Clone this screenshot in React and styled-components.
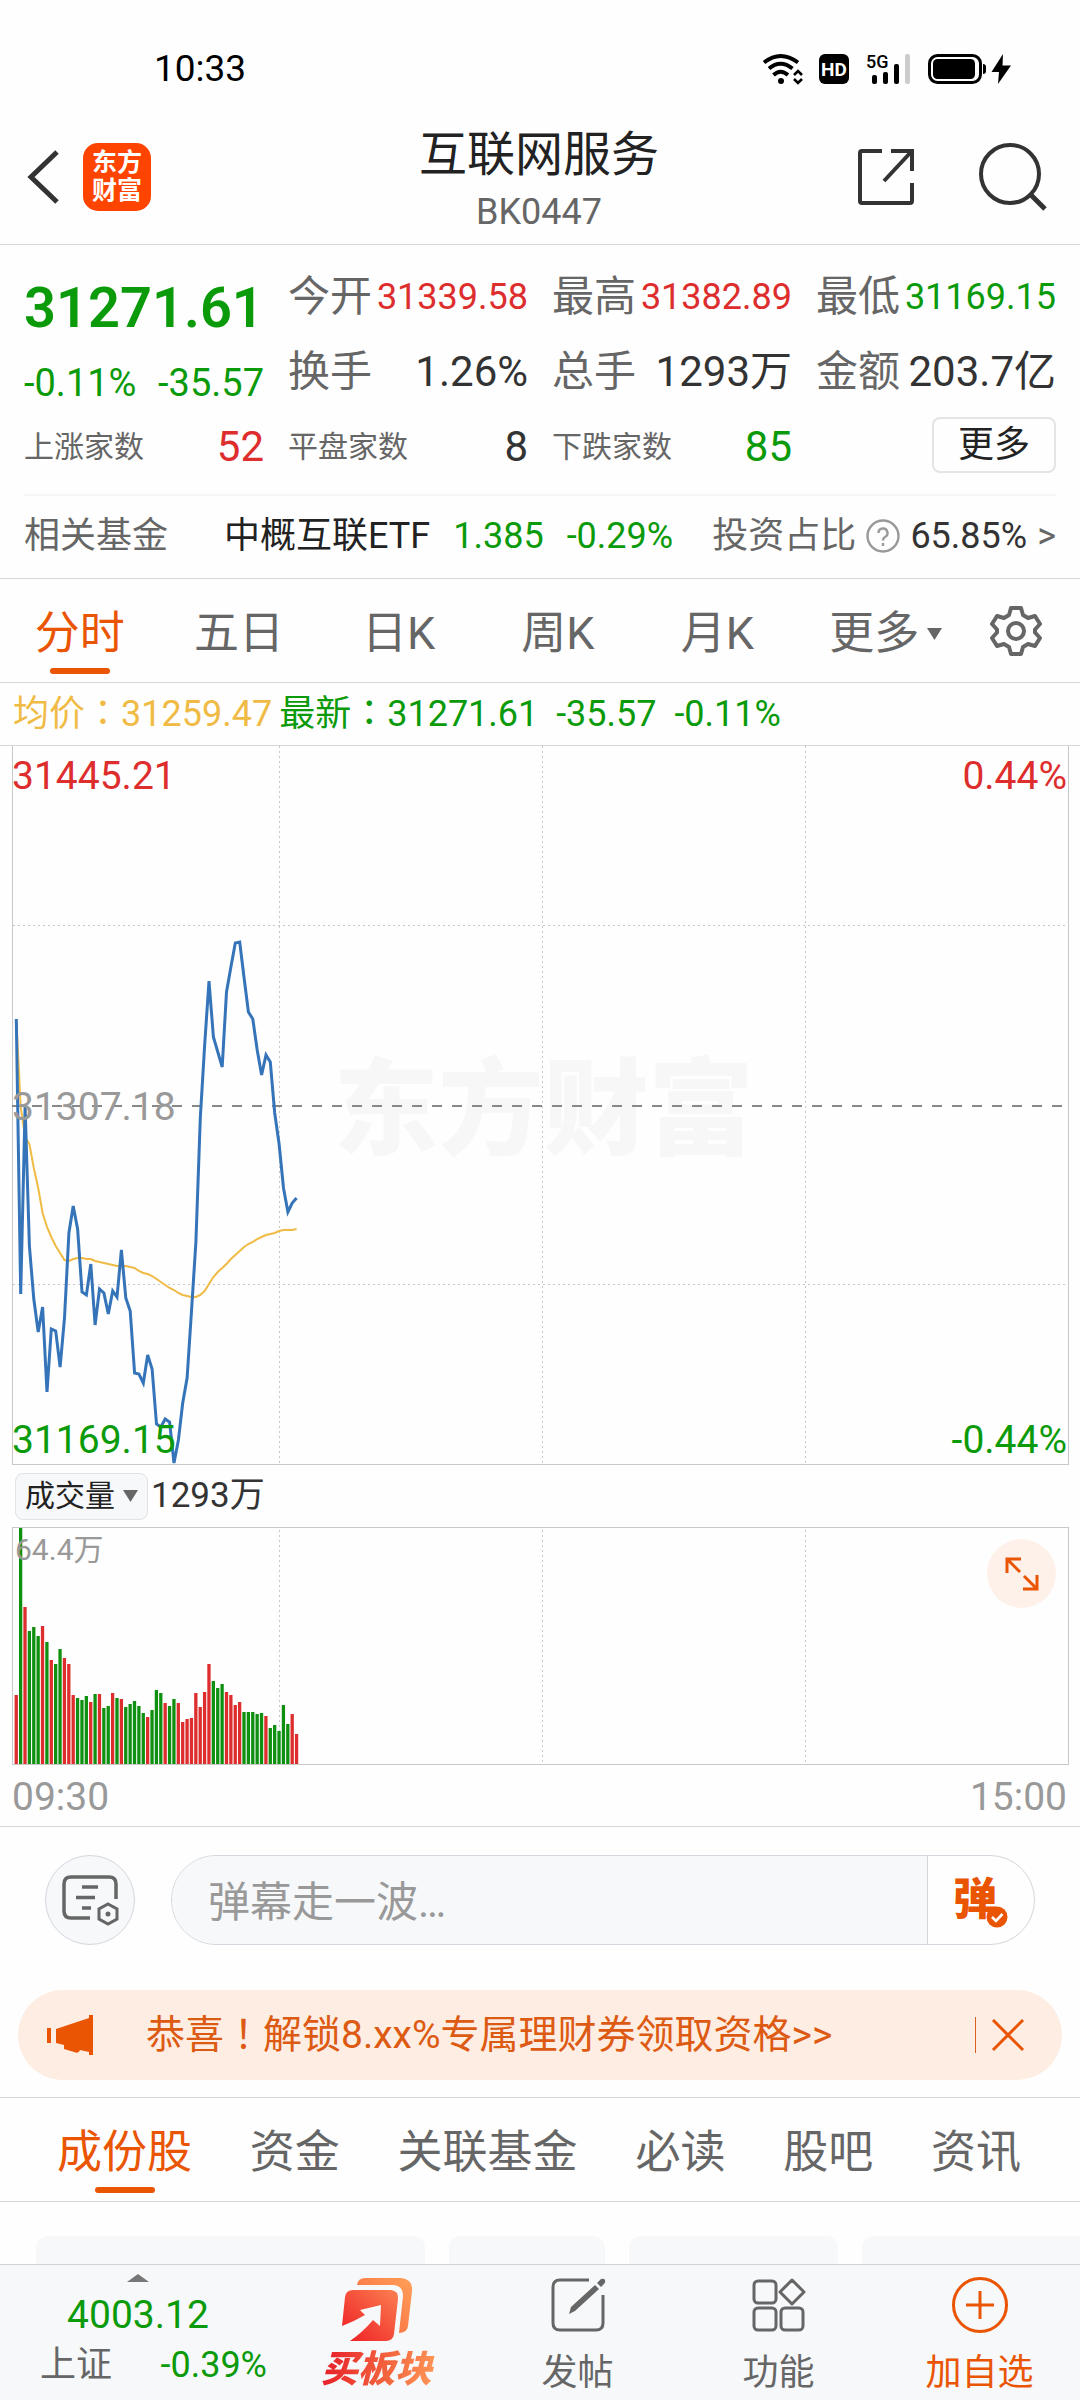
import React from "react";
import styled, { createGlobalStyle, css } from "styled-components";

const color = {
  page: "#fefefe",
  ink: "#333333",
  dark: "#222222",
  grey: "#666666",
  mute: "#999999",
  line: "#d6d6d6",
  panel: "#f7f8fa",
  red: "#dd2d2d",
  green: "#0a9a0a",
  orange: "#ea5504",
  amber: "#f0bb45",
  blue: "#3574b9",
};

const Global = createGlobalStyle`
  * { box-sizing: border-box; }
  body {
    margin: 0;
    background: ${color.page};
    color: ${color.ink};
    font-family: Roboto, "Noto Sans CJK SC", sans-serif;
  }
  button, input, select { font-family: inherit; color: inherit; margin: 0; }
  button { background: none; border: 0; padding: 0; cursor: pointer; }
  svg { display: block; flex: none; overflow: visible; }
`;

const Screen = styled.div`
  display: flex;
  flex-direction: column;
  height: 100vh;
`;

const Content = styled.main`
  flex: 1;
  min-height: 0;
  overflow-y: auto;
  overflow-x: hidden;
  scrollbar-width: none;
`;

/* ---------- status bar and header ---------- */

const StatusBar = styled.div`
  display: flex;
  align-items: center;
  justify-content: space-between;
  height: 92px;
  padding: 46px 69px 0 154px;
  color: #000;
  font-size: 37px;
  line-height: 46px;
`;

const StatusIcons = styled.div`
  display: flex;
  gap: 17px;
`;

const Header = styled.header`
  display: flex;
  align-items: center;
  justify-content: space-between;
  height: 153px;
  padding: 18px 32px 0 26px;
  border-bottom: 1px solid ${color.line};
`;

const HeaderSide = styled.div`
  display: flex;
  align-items: center;
  justify-content: ${(p) => (p.$end ? "flex-end" : "flex-start")};
  gap: ${(p) => (p.$end ? 62 : 23)}px;
  flex: 1;
`;

const Logo = styled.a`
  display: flex;
  flex-direction: column;
  align-items: center;
  justify-content: center;
  width: 68px;
  height: 68px;
  border-radius: 15px;
  background: #ff4400;
  color: #fff;
  font-size: 25px;
  font-weight: 700;
  line-height: 28px;
  text-decoration: none;
`;

const TitleBlock = styled.div`
  padding: 10px 0 0 4px;
  text-align: center;
`;

const Title = styled.h1`
  margin: 0;
  color: ${color.dark};
  font-size: 48px;
  font-weight: 400;
  line-height: 60px;
`;

const Code = styled.div`
  color: ${color.grey};
  font-size: 36px;
  line-height: 55px;
`;

/* ---------- quote ---------- */

const Quote = styled.section`
  padding: 14px 24px 0;
  border-bottom: 1px solid ${color.line};
`;

const QuoteGrid = styled.div`
  display: grid;
  grid-template-columns: repeat(4, 1fr);
  grid-auto-rows: 75px;
  column-gap: 24px;
  padding-bottom: 10px;
  border-bottom: 2px solid #f5f5f5;
`;

const Latest = styled.div`
  grid-row: span 2;
  color: ${color.green};
`;

const LatestPrice = styled.div`
  font-size: 56px;
  font-weight: 600;
  line-height: 98px;
`;

const LatestChange = styled.div`
  display: flex;
  justify-content: space-between;
  font-size: 38px;
  line-height: 52px;
`;

const Stat = styled.div`
  display: flex;
  align-items: center;
  justify-content: space-between;
  line-height: 48px;
  white-space: nowrap;
`;

const StatLabel = styled.span`
  color: ${color.grey};
  font-size: ${(p) => (p.$small ? 30 : 42)}px;
`;

const StatValue = styled.span`
  color: ${(p) => p.$tone || color.ink};
  font-size: ${(p) => (p.$small ? 36 : 42)}px;
`;

const MoreButton = styled.button`
  justify-self: end;
  align-self: center;
  width: 124px;
  height: 56px;
  margin-bottom: 4px;
  border: 2px solid #e4e4e4;
  border-radius: 8px;
  color: ${color.dark};
  font-size: 36px;
  line-height: 52px;
`;

const FundRow = styled.div`
  display: flex;
  align-items: center;
  height: 82px;
  padding-bottom: 2px;
  font-size: 36px;
  line-height: 48px;
  white-space: nowrap;
`;

const FundGroup = styled.span`
  display: flex;
  align-items: center;
  gap: ${(p) => p.$gap}px;
  margin-left: ${(p) => p.$push || 0};
  color: ${(p) => p.$tone || color.grey};
`;

const FundName = styled.a`
  color: ${color.dark};
  text-decoration: none;
`;

const Dark = styled.span`
  color: ${color.ink};
`;

/* ---------- tabs ---------- */

const tabFace = css`
  display: flex;
  flex-direction: column;
  align-items: center;
  padding: 21px 0 8px;
  color: ${(p) => (p.$active ? color.orange : color.grey)};
  font-size: 45px;
  line-height: 68px;
  white-space: nowrap;
  &::after {
    content: "";
    width: 60px;
    height: 6px;
    border-radius: 3px;
    background: ${(p) => (p.$active ? color.orange : "transparent")};
  }
`;

const PeriodTabs = styled.nav`
  display: grid;
  grid-template-columns: repeat(6, 4fr) 3fr;
  padding-right: 4px;
  border-bottom: 1px solid ${color.line};
`;

const PeriodTab = styled.button`
  ${tabFace}
`;

const WithArrow = styled.span`
  display: flex;
  align-items: center;
  gap: 8px;
  padding-left: 18px;
`;

const GearButton = styled.button`
  display: grid;
  place-items: center;
`;

const SectionTabs = styled.nav`
  display: flex;
  justify-content: space-between;
  padding: 0 59px 0 57px;
  border-top: 1px solid ${color.line};
  border-bottom: 1px solid ${color.line};
`;

const SectionTab = styled.button`
  ${tabFace}
`;

/* ---------- chart ---------- */

const Legend = styled.div`
  display: flex;
  gap: 7px;
  height: 63px;
  padding-left: 13px;
  border-bottom: 1px solid ${color.line};
  font-size: 36px;
  line-height: 62px;
  white-space: pre;
`;

const LegendItem = styled.span`
  color: ${(p) => p.$tone};
`;

const Wide = styled.span`
  font-family: "Noto Sans CJK TC", sans-serif;
  line-height: 1;
`;

const Frame = styled.div`
  position: relative;
  margin: 0 11px 0 12px;
  border: 1px solid #c8c8c8;
  border-top-width: ${(p) => (p.$openTop ? 0 : 1)}px;
  svg.plot { width: 100%; height: ${(p) => p.$height}px; }
`;

const corners = {
  topLeft: "top: 6px; left: -1px;",
  topRight: "top: 6px; right: 1px;",
  middle: "top: 50%; left: -1px; margin-top: -22px;",
  bottomLeft: "bottom: 0; left: -1px;",
  bottomRight: "bottom: 0; right: 1px;",
};

const AxisLabel = styled.span`
  position: absolute;
  ${(p) => corners[p.$at]}
  color: ${(p) => p.$tone};
  font-size: 39px;
  line-height: 48px;
`;

const VolumeMax = styled.span`
  position: absolute;
  top: 2px;
  left: 2px;
  color: ${color.mute};
  font-size: 30px;
  line-height: 40px;
`;

const Watermark = styled.span`
  position: absolute;
  top: 50%;
  left: 0;
  right: 0;
  margin-top: -54px;
  padding-left: 6px;
  color: #f7f7f7;
  font-size: 105px;
  font-weight: 900;
  line-height: 120px;
  text-align: center;
`;

const Plot = styled.svg`
  position: relative;
`;

const ExpandButton = styled.button`
  position: absolute;
  top: 11px;
  right: 12px;
  display: grid;
  place-items: center;
  width: 69px;
  height: 69px;
  border-radius: 50%;
  background: #fef1ea;
`;

const VolumeBar = styled.div`
  display: flex;
  align-items: center;
  gap: 3px;
  height: 62px;
  padding-left: 15px;
  font-size: 35px;
  line-height: 48px;
`;

const Picker = styled.label`
  display: flex;
  align-items: center;
  gap: 8px;
  height: 47px;
  padding: 0 9px;
  border: 1px solid #e0e2e8;
  border-radius: 8px;
  background: ${color.panel};
  select {
    appearance: none;
    border: 0;
    padding: 0;
    background: none;
    color: ${color.dark};
    font-size: 30px;
    line-height: 44px;
  }
`;

const TimeAxis = styled.div`
  display: flex;
  justify-content: space-between;
  padding: 3px 13px 0 12px;
  border-bottom: 1px solid ${color.line};
  color: ${color.mute};
  font-size: 39px;
  line-height: 58px;
`;

/* ---------- comments and notice ---------- */

const Comments = styled.form`
  display: flex;
  gap: 36px;
  padding: 28px 45px 0;
`;

const RoundButton = styled.button`
  display: grid;
  place-items: center;
  flex: none;
  width: 90px;
  height: 90px;
  border: 1px solid #d3d6dc;
  border-radius: 50%;
  background: ${color.panel};
`;

const CommentBox = styled.div`
  display: flex;
  flex: 1;
  height: 90px;
  border: 1px solid #d3d6dc;
  border-radius: 45px;
  overflow: hidden;
`;

const CommentInput = styled.input`
  flex: 1;
  min-width: 0;
  padding: 4px 36px 0;
  border: 0;
  border-right: 1px solid #d3d6dc;
  background: ${color.panel};
  font-size: 42px;
  &::placeholder { color: ${color.mute}; opacity: 1; }
`;

const SendButton = styled.button`
  position: relative;
  width: 106px;
  padding-right: 12px;
  color: ${color.orange};
  font-size: 44px;
  font-weight: 900;
  line-height: 80px;
  svg { position: absolute; left: 58px; top: 50px; }
`;

const Notice = styled.div`
  display: flex;
  align-items: center;
  height: 90px;
  margin: 45px 18px 17px;
  padding: 0 37px 0 29px;
  border-radius: 45px;
  background: #fdede3;
  color: ${color.orange};
  font-size: 39px;
  line-height: 52px;
  white-space: nowrap;
`;

const NoticeLink = styled.a`
  flex: 1;
  padding-left: 52px;
  color: #dd5a12;
  text-decoration: none;
`;

const CloseButton = styled.button`
  padding-left: 15px;
  border-left: 1px solid #d9611f;
  height: 36px;
`;

/* ---------- cards and bottom bar ---------- */

const Cards = styled.div`
  display: flex;
  gap: 24px;
  padding: 34px 0 0 36px;
  overflow: hidden;
`;

const Card = styled.div`
  flex: none;
  width: ${(p) => p.$width}px;
  height: 90px;
  border-radius: 12px;
  background: ${color.panel};
`;

const BottomBar = styled.footer`
  display: grid;
  grid-template-columns: 276px repeat(4, 1fr);
  flex: none;
  height: 136px;
  border-top: 1px solid #ced2d9;
  background: ${color.panel};
`;

const IndexButton = styled.button`
  display: flex;
  flex-direction: column;
  align-items: center;
  padding-top: 9px;
  color: ${color.green};
`;

const IndexPrice = styled.span`
  margin-top: 9px;
  font-size: 39px;
  line-height: 48px;
`;

const IndexRow = styled.span`
  display: flex;
  justify-content: space-between;
  align-self: stretch;
  padding: 0 9px 0 40px;
  font-size: 36px;
  line-height: 52px;
`;

const Action = styled.button`
  display: flex;
  flex-direction: column;
  align-items: center;
  padding-top: ${(p) => (p.$tall ? 13 : 11)}px;
  color: ${(p) => p.$tone || color.grey};
  font-size: 36px;
  line-height: 48px;
`;

const IconSlot = styled.span`
  display: grid;
  place-items: center;
  height: 58px;
  margin-bottom: ${(p) => (p.$tall ? 10 : 15)}px;
`;

const GradientText = styled.span`
  padding: 0 4px;
  background: linear-gradient(100deg, #e8222a 10%, #f2603c 55%, #ff9a58);
  background-clip: text;
  color: transparent;
  font-size: 37px;
  font-style: italic;
  font-weight: 900;
`;

/* ---------- data ---------- */

const price = [
  274, 549, 362, 501, 554, 587, 562, 647, 584, 586, 622, 573, 488, 461, 484, 547,
  550, 519, 580, 544, 548, 569, 546, 552, 505, 553, 566, 628, 629, 638, 610, 624,
  679, 682, 674, 677, 718, 695, 658, 633, 566, 497, 373, 301, 236, 292, 307, 322,
  247, 222, 198, 197, 233, 267, 274, 305, 330, 310, 317, 368, 399, 443, 467, 458, 453,
];
const average = [
  274, 362, 392, 399, 423, 443, 468, 482, 492, 501, 508, 515, 516, 514, 513, 513,
  514, 514, 516, 517, 518, 519, 520, 521, 521, 521, 522, 523, 526, 528, 529, 531,
  534, 537, 540, 543, 545, 548, 550, 551, 552, 552, 550, 546, 539, 532, 527, 523,
  519, 514, 510, 506, 502, 499, 497, 494, 492, 490, 489, 488, 486, 485, 485, 485, 484,
];
const volume = [
  69, 236, 157, 133, 137, 128, 138, 122, 104, 100, 115, 106, 100, 69, 66, 64, 68,
  62, 70, 70, 56, 58, 71, 66, 65, 57, 60, 63, 58, 51, 47, 54, 74, 71, 61, 58, 65,
  61, 42, 45, 46, 71, 57, 72, 100, 83, 76, 80, 72, 69, 59, 62, 52, 52, 52, 50, 51,
  48, 36, 39, 33, 59, 40, 50, 30,
];
const direction =
  "RGRGGGRGRGGRRRGGGRGRGGRGRGGGGGRGGGRGGRRRRRRRRGGGRRRRGGGGGRGGGGGRR";

const step = 4.38;
const toX = (i) => 4.3 + i * step;
const toPoints = (list) => list.map((y, i) => `${toX(i).toFixed(1)},${y}`).join(" ");

const stats = [
  { label: "今开", value: "31339.58", tone: color.red, small: true },
  { label: "最高", value: "31382.89", tone: color.red, small: true },
  { label: "最低", value: "31169.15", tone: color.green, small: true },
  { label: "换手", value: "1.26%" },
  { label: "总手", value: "1293万" },
  { label: "金额", value: "203.7亿" },
];
const counts = [
  { label: "上涨家数", value: "52", tone: color.red },
  { label: "平盘家数", value: "8" },
  { label: "下跌家数", value: "85", tone: color.green },
];

/* ---------- icons ---------- */

const WifiIcon = () => (
  <svg width="40" height="30" viewBox="0 0 40 30" fill="none" stroke="#000" strokeWidth="4">
    <path d="M2 8.500Q18.500-4.500 36 8.500" />
    <path d="M7 14.500Q18.500 5 30.500 14.500" />
    <path d="M11.500 21Q18.500 14.500 26 21" />
    <circle cx="19" cy="27" r="3" fill="#000" stroke="none" />
    <path d="M32 21l4-4 4 4M32 25l4 4 4-4" strokeWidth="2.600" />
  </svg>
);

const HdIcon = () => (
  <svg width="30" height="30" viewBox="0 0 30 30">
    <rect width="30" height="30" rx="6" />
    <text x="15" y="22" fill="#fff" fontFamily="Roboto" fontSize="19" fontWeight="700" textAnchor="middle">HD</text>
  </svg>
);

const SignalIcon = () => (
  <svg width="45" height="30" viewBox="0 0 45 30">
    <text x="0" y="14" fontFamily="Roboto" fontSize="18" fontWeight="500">5G</text>
    <rect x="6" y="21" width="5" height="9" rx="2" />
    <rect x="17" y="18" width="5" height="12" rx="2" />
    <rect x="28" y="10" width="5" height="20" rx="2" />
    <rect x="39" y="0" width="5" height="30" rx="2" fill="#ccc" />
  </svg>
);

const BatteryIcon = () => (
  <svg width="83" height="30" viewBox="0 0 83 30">
    <rect x="1.500" y="1.500" width="51" height="27" rx="8" fill="none" stroke="#000" strokeWidth="3" />
    <rect x="5" y="5" width="42" height="20" rx="4.500" />
    <path d="M55 10q3 0 3 3v4q0 3-3 3z" />
    <path d="M75 0L63.500 18H71L70 30 83 11.500H74.500z" />
  </svg>
);

const BackIcon = () => (
  <svg width="34" height="56" viewBox="0 0 34 56" fill="none" stroke="#333" strokeWidth="5">
    <path d="M31 3L5 28l26 25" />
  </svg>
);

const ShareIcon = () => (
  <svg width="60" height="60" viewBox="0 0 60 60" fill="none" stroke="#333" strokeWidth="4">
    <path d="M26 4H6q-2 0-2 2v48q0 2 2 2h48q2 0 2-2V36" />
    <path d="M35 4h21v20M55 5L28 34" />
  </svg>
);

const SearchIcon = () => (
  <svg width="70" height="70" viewBox="0 0 70 70" fill="none" stroke="#333" strokeWidth="4">
    <circle cx="32" cy="32" r="29" />
    <path d="M53 53l14 14" strokeWidth="5" />
  </svg>
);

const HelpIcon = () => (
  <svg width="34" height="34" viewBox="0 0 34 34" fill="none" stroke="#999" strokeWidth="2.400">
    <circle cx="17" cy="17" r="15.500" />
    <path d="M12.500 14a4.500 4.500 0 1 1 6.500 4q-2 1-2 3.500" />
    <path d="M17 24v3" />
  </svg>
);

const GearIcon = () => (
  <svg width="52" height="52" viewBox="0 0 52 52" fill="none" stroke="#666" strokeWidth="4" strokeLinejoin="round">
    <path d="M21 3h10l2 7 5 3 7-2 5 8-5 5.500v3L50 33l-5 8-7-2-5 3-2 7H21l-2-7-5-3-7 2-5-8 5-5.500v-3L2 19l5-8 7 2 5-3z" />
    <circle cx="26" cy="26" r="8" />
  </svg>
);

const Down = ({ w = 15, h = 12 }) => (
  <svg width={w} height={h} viewBox="0 0 15 12" preserveAspectRatio="none" fill="#666">
    <path d="M0 0h15L7.500 12z" />
  </svg>
);

const ExpandIcon = () => (
  <svg width="34" height="34" viewBox="0 0 34 34" fill="none" stroke={color.orange} strokeWidth="3">
    <path d="M2 16V2h14M3 3l12 12M32 18v14H18M31 31L19 19" />
  </svg>
);

const PanelIcon = () => (
  <svg width="56" height="50" viewBox="0 0 56 50" fill="none" stroke="#666" strokeWidth="3.500">
    <path d="M28 43H9q-7 0-7-7V9q0-7 7-7h38q7 0 7 7v15" />
    <path d="M20 12h16M14 22.500h19M20 33h9" />
    <path d="M46 29l9 5v10l-9 5-9-5V34z" strokeWidth="3" />
    <circle cx="46" cy="39" r="2.500" fill="#666" stroke="none" />
  </svg>
);

const CheckBadge = () => (
  <svg width="22" height="22" viewBox="0 0 22 22">
    <circle cx="11" cy="11" r="10.500" fill={color.orange} />
    <path d="M6 11l4 4 6.500-7" fill="none" stroke="#fff" strokeWidth="2.600" />
  </svg>
);

const HornIcon = () => (
  <svg width="47" height="40" viewBox="0 0 47 40" fill={color.orange}>
    <path d="M0 13h4v15H0zM9 14L42 3V0h4v40h-4v-3l-9-2q-1 4-6 2l-10-3 0-4-8-2z" />
  </svg>
);

const CloseIcon = () => (
  <svg width="34" height="34" viewBox="0 0 34 34" fill="none" stroke={color.orange} strokeWidth="3">
    <path d="M2 2l30 30M32 2L2 32" />
  </svg>
);

const BuyIcon = () => (
  <svg width="70" height="64" viewBox="0 0 70 64">
    <defs>
      <linearGradient id="buyFront" x1="0" y1="1" x2="1" y2="0">
        <stop offset="0" stopColor="#ee1c25" />
        <stop offset="1" stopColor="#fb8050" />
      </linearGradient>
      <linearGradient id="buyBack" x1="0" y1="1" x2="1" y2="0">
        <stop offset="0" stopColor="#f8653f" />
        <stop offset="1" stopColor="#ff9f58" />
      </linearGradient>
    </defs>
    <path fill="url(#buyBack)" d="M15 7q1-7 8-7h36q12 1 11 13l-4 35q-1 7-9 7l4-37q0-10-9-11z" />
    <path fill="url(#buyFront)" d="M3 19q1-7 8-7h38q8 1 7 9l-4 35q-1 7-8 7H8q13-9 23-21l7 6 1-21-21 5 5 5Q13 43 0 48z" />
  </svg>
);

const PostIcon = () => (
  <svg width="54" height="54" viewBox="0 0 54 54" fill="none" stroke="#666" strokeWidth="3">
    <path d="M38 2H9Q2 2 2 9v36q0 7 7 7h36q7 0 7-7V17" />
    <path d="M18 36l2-7L44 7l4 4-24 22z" fill="#666" stroke="none" />
    <path d="M46 5l4-4q3-1 4 1t-1 4l-3 3z" fill="#666" stroke="none" />
  </svg>
);

const GridIcon = () => (
  <svg width="54" height="52" viewBox="0 0 54 52" fill="none" stroke="#666" strokeWidth="3" strokeLinejoin="round">
    <rect x="2" y="2" width="22" height="22" rx="4" />
    <rect x="2" y="29" width="22" height="22" rx="4" />
    <rect x="29" y="29" width="22" height="22" rx="4" />
    <path d="M40 1l12 12-12 12-12-12z" />
  </svg>
);

const AddIcon = () => (
  <svg width="58" height="58" viewBox="0 0 58 58" fill="none" stroke={color.orange} strokeWidth="3">
    <circle cx="29" cy="29" r="26.500" />
    <path d="M29 15v28M15 29h28" />
  </svg>
);

/* ---------- plots ---------- */

const grid = { stroke: "#c8c8c8", strokeWidth: 1, strokeDasharray: "2 3" };

const PricePlot = () => (
  <Plot className="plot" viewBox="1 1 1055 718" preserveAspectRatio="none" fill="none">
    {[267.5, 530.5, 793.5].map((x) => (
      <path key={x} d={`M${x} 1V719`} {...grid} />
    ))}
    {[180.5, 539.5].map((y) => (
      <path key={y} d={`M1 ${y}H1056`} {...grid} />
    ))}
    <path d="M0 361H1056" stroke="#888" strokeWidth="2" strokeDasharray="10 10" />
    <polyline points={toPoints(average)} stroke={color.amber} strokeWidth="2" />
    <polyline points={toPoints(price)} stroke={color.blue} strokeWidth="3" />
  </Plot>
);

const VolumePlot = () => (
  <Plot className="plot" viewBox="1 0 1055 236" preserveAspectRatio="none" fill="none">
    {[267.5, 530.5, 793.5].map((x) => (
      <path key={x} d={`M${x} 2V236`} {...grid} />
    ))}
    {volume.map((h, i) => (
      <rect
        key={i}
        x={toX(i) - 1.7}
        y={236 - h}
        width="3.300"
        height={h}
        fill={direction[i] === "R" ? color.red : "#109010"}
      />
    ))}
  </Plot>
);

export default function App() {
  return (
    <Screen>
      <Global />
      <Content>
        <StatusBar>
          <span>10:33</span>
          <StatusIcons>
            <WifiIcon />
            <HdIcon />
            <SignalIcon />
            <BatteryIcon />
          </StatusIcons>
        </StatusBar>

        <Header>
          <HeaderSide>
            <button aria-label="返回"><BackIcon /></button>
            <Logo href="#home">
              <span>东方</span>
              <span>财富</span>
            </Logo>
          </HeaderSide>
          <TitleBlock>
            <Title>互联网服务</Title>
            <Code>BK0447</Code>
          </TitleBlock>
          <HeaderSide $end>
            <button aria-label="分享"><ShareIcon /></button>
            <button aria-label="搜索"><SearchIcon /></button>
          </HeaderSide>
        </Header>

        <Quote>
          <QuoteGrid>
            <Latest>
              <LatestPrice>31271.61</LatestPrice>
              <LatestChange>
                <span>-0.11%</span>
                <span>-35.57</span>
              </LatestChange>
            </Latest>
            {stats.map((s) => (
              <Stat key={s.label}>
                <StatLabel>{s.label}</StatLabel>
                <StatValue $tone={s.tone} $small={s.small}>{s.value}</StatValue>
              </Stat>
            ))}
            {counts.map((s) => (
              <Stat key={s.label}>
                <StatLabel $small>{s.label}</StatLabel>
                <StatValue $tone={s.tone}>{s.value}</StatValue>
              </Stat>
            ))}
            <MoreButton>更多</MoreButton>
          </QuoteGrid>
          <FundRow>
            <FundGroup>相关基金</FundGroup>
            <FundGroup $gap={23} $push="56px" $tone={color.green}>
              <FundName href="#fund">中概互联ETF</FundName>
              <span>1.385</span>
              <span>-0.29%</span>
            </FundGroup>
            <FundGroup $gap={10} $push="auto">
              <span>投资占比</span>
              <HelpIcon />
              <Dark>65.85%</Dark>
              <span>&gt;</span>
            </FundGroup>
          </FundRow>
        </Quote>

        <PeriodTabs>
          <PeriodTab $active>分时</PeriodTab>
          <PeriodTab>五日</PeriodTab>
          <PeriodTab>日K</PeriodTab>
          <PeriodTab>周K</PeriodTab>
          <PeriodTab>月K</PeriodTab>
          <PeriodTab>
            <WithArrow>更多<Down /></WithArrow>
          </PeriodTab>
          <GearButton aria-label="设置"><GearIcon /></GearButton>
        </PeriodTabs>

        <Legend>
          <LegendItem $tone={color.amber}>均价<Wide>：</Wide>31259.47</LegendItem>
          <LegendItem $tone={color.green}>最新<Wide>：</Wide>31271.61  -35.57  -0.11%</LegendItem>
        </Legend>

        <Frame $openTop $height={718}>
          <Watermark>东方财富</Watermark>
          <PricePlot />
          <AxisLabel $at="topLeft" $tone={color.red}>31445.21</AxisLabel>
          <AxisLabel $at="topRight" $tone={color.red}>0.44%</AxisLabel>
          <AxisLabel $at="middle" $tone={color.mute}>31307.18</AxisLabel>
          <AxisLabel $at="bottomLeft" $tone={color.green}>31169.15</AxisLabel>
          <AxisLabel $at="bottomRight" $tone={color.green}>-0.44%</AxisLabel>
        </Frame>

        <VolumeBar>
          <Picker>
            <select aria-label="指标">
              <option>成交量</option>
            </select>
            <Down />
          </Picker>
          <span>1293万</span>
        </VolumeBar>

        <Frame $height={236}>
          <VolumePlot />
          <VolumeMax>64.4万</VolumeMax>
          <ExpandButton aria-label="全屏"><ExpandIcon /></ExpandButton>
        </Frame>

        <TimeAxis>
          <span>09:30</span>
          <span>15:00</span>
        </TimeAxis>

        <Comments onSubmit={(e) => e.preventDefault()}>
          <RoundButton type="button" aria-label="弹幕设置"><PanelIcon /></RoundButton>
          <CommentBox>
            <CommentInput aria-label="弹幕" placeholder="弹幕走一波…" />
            <SendButton type="button">弹<CheckBadge /></SendButton>
          </CommentBox>
        </Comments>

        <Notice>
          <HornIcon />
          <NoticeLink href="#coupon">恭喜<Wide>！</Wide>解锁8.xx%专属理财券领取资格&gt;&gt;</NoticeLink>
          <CloseButton aria-label="关闭"><CloseIcon /></CloseButton>
        </Notice>

        <SectionTabs>
          <SectionTab $active>成份股</SectionTab>
          <SectionTab>资金</SectionTab>
          <SectionTab>关联基金</SectionTab>
          <SectionTab>必读</SectionTab>
          <SectionTab>股吧</SectionTab>
          <SectionTab>资讯</SectionTab>
        </SectionTabs>

        <Cards>
          <Card $width={389} />
          <Card $width={156} />
          <Card $width={209} />
          <Card $width={260} />
        </Cards>
      </Content>

      <BottomBar>
        <IndexButton>
          <svg width="22" height="8" viewBox="0 0 22 8" fill="#777"><path d="M0 8L11 0l11 8z" /></svg>
          <IndexPrice>4003.12</IndexPrice>
          <IndexRow>
            <FundGroup>上证</FundGroup>
            <span>-0.39%</span>
          </IndexRow>
        </IndexButton>
        <Action $tall>
          <IconSlot $tall><BuyIcon /></IconSlot>
          <GradientText>买板块</GradientText>
        </Action>
        <Action>
          <IconSlot><PostIcon /></IconSlot>
          发帖
        </Action>
        <Action>
          <IconSlot><GridIcon /></IconSlot>
          功能
        </Action>
        <Action $tone={color.orange}>
          <IconSlot><AddIcon /></IconSlot>
          加自选
        </Action>
      </BottomBar>
    </Screen>
  );
}
